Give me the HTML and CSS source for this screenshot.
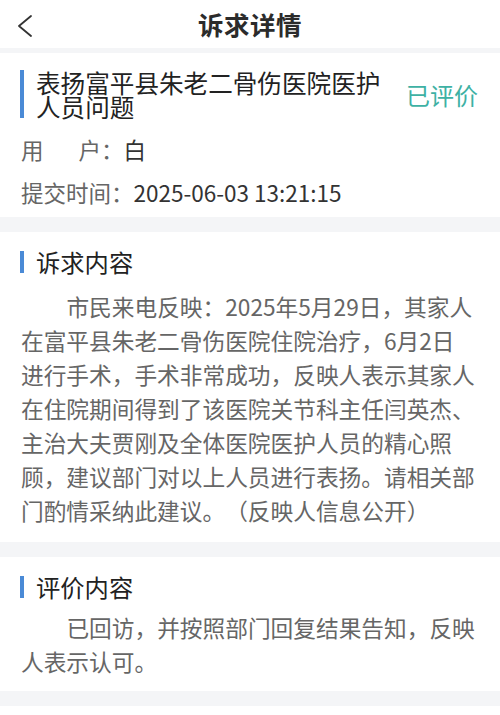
FILE: index.html
```html
<!DOCTYPE html>
<html lang="zh-CN">
<head>
<meta charset="utf-8">
<title>诉求详情</title>
<link rel="stylesheet" href="styles.css">
</head>
<body>
<header class="topbar">
  <div class="back">
    <svg width="16" height="22" viewBox="0 0 16 22"><polyline points="14,1 2,11 14,21" fill="none" stroke="#333" stroke-width="1.8" stroke-linecap="round" stroke-linejoin="round"/></svg>
  </div>
  <h1 class="page-title">诉求详情</h1>
  <div class="spacer"></div>
</header>

<section class="card card-summary">
  <div class="summary-head">
    <h2 class="summary-title">表扬富平县朱老二骨伤医院医护人员问题</h2>
    <span class="status">已评价</span>
  </div>
  <div class="info-row info-first"><span class="label"><span class="lbl-user">用</span>户：</span><span class="value">白</span></div>
  <div class="info-row"><span class="label">提交时间：</span><span class="value">2025-06-03 13:21:15</span></div>
</section>

<section class="card card-content">
  <h3 class="section-head">诉求内容</h3>
  <p class="section-text">市民来电反映：2025年5月29日，其家人在富平县朱老二骨伤医院住院治疗，6月2日进行手术，手术非常成功，反映人表示其家人在住院期间得到了该医院关节科主任闫英杰、主治大夫贾刚及全体医院医护人员的精心照顾，建议部门对以上人员进行表扬。请相关部门酌情采纳此建议。（反映人信息公开）</p>
</section>

<section class="card card-eval">
  <h3 class="section-head">评价内容</h3>
  <p class="section-text eval-text">已回访，并按照部门回复结果告知，反映人表示认可。</p>
</section>

<section class="card card-tail"></section>
</body>
</html>
```

FILE: styles.css
```css
html, body {
  margin: 0;
  padding: 0;
}
body {
  background: #f4f5f7;
  font-family: "Noto Sans CJK SC", "Noto Sans", sans-serif;
  color: #333;
  width: 500px;
  text-spacing-trim: space-all;
}
.topbar {
  height: 48px;
  background: #fff;
  display: grid;
  grid-template-columns: 60px 1fr 60px;
  align-items: center;
}
.back {
  padding-left: 17px;
  display: flex;
  align-items: center;
  padding-top: 4px;
}
.page-title {
  margin: 0;
  text-align: center;
  font-size: 25.5px;
  font-weight: 700;
  color: #2b2b2b;
  line-height: 48px;
  letter-spacing: 0.5px;
}
.card {
  background: #fff;
  margin-top: 5px;
}
.card-summary {
  padding: 17px 22px 8px 20px;
}
.summary-head {
  display: flex;
  align-items: center;
}
.summary-title {
  flex: 1;
  margin: 0;
  font-weight: 400;
  font-size: 24.6px;
  line-height: 24px;
  color: #222;
  border-left: 4px solid #4a8ad6;
  padding-left: 12px;
  margin-right: 18px;
}
.status {
  font-size: 24px;
  color: #3eb1a4;
  line-height: 30px;
  padding-top: 2px;
}
.info-row {
  font-size: 22.5px;
  line-height: 34px;
  color: #666;
  margin-top: 9px;
  padding-left: 1px;
}
.info-first {
  margin-top: 14px;
}
.lbl-user {
  margin-right: 35px;
}
.value {
  color: #333;
}
.card-content {
  margin-top: 15px;
  padding: 13px 24px 14px 21px;
}
.section-head {
  margin: 0 0 11px 0;
  display: flex;
  align-items: center;
  gap: 12px;
  font-size: 24.3px;
  font-weight: 400;
  line-height: 34px;
  color: #222;
}
.section-head::before {
  content: "";
  width: 4px;
  height: 22px;
  background: #4a8ad6;
  margin-left: -1px;
}
.section-text {
  margin: 0;
  font-size: 22.7px;
  line-height: 34px;
  color: #666;
  text-indent: 2em;
}
.card-eval {
  margin-top: 15px;
  padding: 13px 24px 12px 21px;
}
.card-eval .section-head {
  margin-bottom: 7px;
}
.card-tail {
  margin-top: 15px;
  height: 20px;
}
```
